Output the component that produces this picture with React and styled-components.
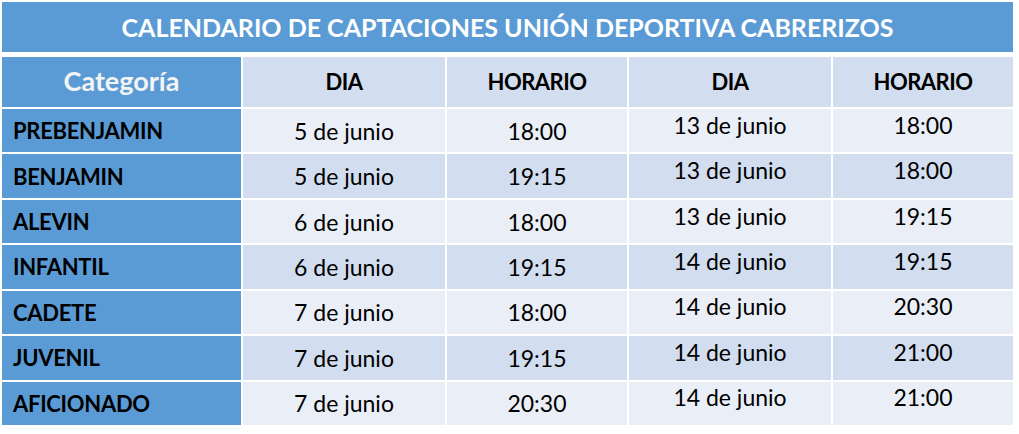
import React from 'react';
import styled, { createGlobalStyle } from 'styled-components';

const GlobalStyle = createGlobalStyle`
    html, body {
        margin: 0;
        padding: 0;
        background: #ffffff;
    }
    body {
        font-family: Lato, "Open Sans", sans-serif;
        color: #000000;
    }
`;

const Page = styled.div`
    padding: 2px 0 0 2px;
    width: 1011px;
`;

const TitleBar = styled.div`
    height: 50px;
    background: #5b9bd5;
    color: #ffffff;
    font-weight: 700;
    font-size: 25px;
    display: flex;
    align-items: center;
    justify-content: center;
    padding-bottom: 1px;
    box-sizing: border-box;
`;

const Grid = styled.div`
    margin-top: 5px;
    height: 368px;
    display: grid;
    grid-template-columns: 239px 202px 180px 202px 180px;
    grid-template-rows: 50px repeat(7, 1fr);
    gap: 2px;
    background: #ffffff;
`;

const Cell = styled.div`
    display: flex;
    align-items: center;
    justify-content: center;
    font-size: 23px;
    background: ${p => (p.$band ? '#d2deef' : '#eaeff7')};
    padding-bottom: ${p => (p.$raised ? '12px' : '0')};
    box-sizing: border-box;
`;

const HeadCell = styled(Cell)`
    background: #d2deef;
    font-weight: 700;
    font-size: 22px;
    letter-spacing: -0.5px;
    padding-bottom: 2px;
`;

const CategoryHead = styled(HeadCell)`
    background: #5b9bd5;
    color: #f4f4f4;
    font-size: 27px;
    letter-spacing: 0;
    padding-bottom: 4px;
`;

const LabelCell = styled(Cell)`
    background: #5b9bd5;
    justify-content: flex-start;
    padding-left: 11px;
    font-weight: 700;
    font-size: 22px;
    letter-spacing: -0.3px;
`;

const ROWS = [
    ['PREBENJAMIN', '5 de junio', '18:00', '13 de junio', '18:00'],
    ['BENJAMIN', '5 de junio', '19:15', '13 de junio', '18:00'],
    ['ALEVIN', '6 de junio', '18:00', '13 de junio', '19:15'],
    ['INFANTIL', '6 de junio', '19:15', '14 de junio', '19:15'],
    ['CADETE', '7 de junio', '18:00', '14 de junio', '20:30'],
    ['JUVENIL', '7 de junio', '19:15', '14 de junio', '21:00'],
    ['AFICIONADO', '7 de junio', '20:30', '14 de junio', '21:00'],
];

function App() {
    return (
        <Page>
            <GlobalStyle />
            <TitleBar>CALENDARIO DE CAPTACIONES UNIÓN DEPORTIVA CABRERIZOS</TitleBar>
            <Grid>
                <CategoryHead>Categoría</CategoryHead>
                <HeadCell>DIA</HeadCell>
                <HeadCell>HORARIO</HeadCell>
                <HeadCell>DIA</HeadCell>
                <HeadCell>HORARIO</HeadCell>
                {ROWS.map((row, idx) => {
                    const band = idx % 2 === 1;
                    return (
                        <React.Fragment key={idx}>
                            <LabelCell>{row[0]}</LabelCell>
                            <Cell $band={band}>{row[1]}</Cell>
                            <Cell $band={band}>{row[2]}</Cell>
                            <Cell $band={band} $raised>{row[3]}</Cell>
                            <Cell $band={band} $raised>{row[4]}</Cell>
                        </React.Fragment>
                    );
                })}
            </Grid>
        </Page>
    );
}

export default App;
